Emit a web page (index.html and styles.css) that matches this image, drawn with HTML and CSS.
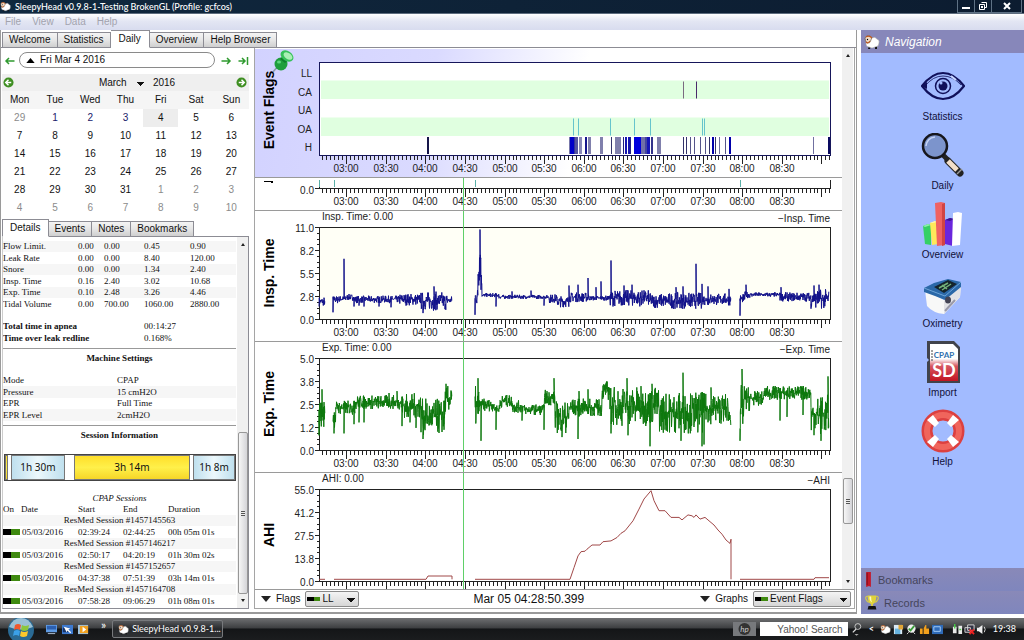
FILE: index.html
```html
<!DOCTYPE html>
<html lang="en">
<head>
  <meta charset="utf-8">
  <title>SleepyHead</title>
  <link rel="stylesheet" href="styles.css">
</head>
<body>
  <svg class="defs" aria-hidden="true">
    <symbol id="sheep" viewBox="0 0 16 16">
      <path d="M5 12l-1 3h2l1-3zM11 12v3h2v-3z" fill="#111"/>
      <path d="M4 6q1-3 4-2q3-2 5 1q3 1 2 4q0 4-4 4q-3 2-6 0q-3 0-3-3q0-3 2-4z" fill="#fff" stroke="#999" stroke-width=".5"/>
      <path d="M1 4q1-3 5-2q3 1 1 4q-1 4-4 3q-2-2-2-5z" fill="#f2dcc8" stroke="#543" stroke-width=".6"/>
      <path d="M2 3q3-2 6 1M2 8q2 2 4-1" fill="none" stroke="#c05a20" stroke-width="1.2"/>
      <circle cx="3.500" cy="5.500" r=".7"/>
    </symbol>
  </svg>

  <header class="titlebar">
    <svg class="logo"><use href="#sheep"/></svg>
    <span class="title">SleepyHead v0.9.8-1-Testing BrokenGL (Profile: gcfcos)</span>
    <div class="winbuttons">
      <button aria-label="Minimize"><svg viewBox="0 0 10 8"><path d="M1 5h8v2H1z" fill="#fff"/></svg></button>
      <button aria-label="Restore"><svg viewBox="0 0 10 8"><path d="M3.500.500h5v5h-1.500M1.500 2.500h5v5h-5z" fill="none" stroke="#fff"/><path d="M3 4h2v2H3z" fill="#fff"/></svg></button>
      <button class="close" aria-label="Close"><svg viewBox="0 0 10 8"><path d="M2 1l6 6M8 1L2 7" stroke="#fff" stroke-width="2"/></svg></button>
    </div>
  </header>

  <nav class="menubar">
    <button>File</button>
    <button>View</button>
    <button>Data</button>
    <button>Help</button>
  </nav>

  <div class="main">
    <div class="workspace">
      <div class="tabs top-tabs">
        <button>Welcome</button>
        <button>Statistics</button>
        <button class="active">Daily</button>
        <button>Overview</button>
        <button>Help Browser</button>
      </div>

      <div class="daily">
        <div class="sidebar">
          <div class="datebar">
            <button class="step" aria-label="Previous day"><svg viewBox="0 0 10 8"><path d="M10 4H2M4.500 1L1.500 4l3 3" fill="none" stroke="#2f9a2f" stroke-width="1.500"/></svg></button>
            <button class="datepill"><svg viewBox="0 0 10 6"><path d="M0 6l5-6 5 6z"/></svg>Fri Mar 4 2016</button>
            <button class="step" aria-label="Next day"><svg viewBox="0 0 10 8"><path d="M0 4h8M5.500 1l3 3-3 3" fill="none" stroke="#2f9a2f" stroke-width="1.500"/></svg></button>
            <button class="step" aria-label="Latest day"><svg viewBox="0 0 10 8"><path d="M0 4h6M3.500 1l3 3-3 3M9 0v8" fill="none" stroke="#2f9a2f" stroke-width="1.500"/></svg></button>
          </div>

          <div class="calendar">
            <div class="cal-head">
              <button aria-label="Previous month"><svg viewBox="0 0 12 12"><circle cx="6" cy="6" r="5.500" fill="#3f8f22"/><path d="M9 6H4M6 3L3 6l3 3" fill="none" stroke="#fff" stroke-width="1.600"/></svg></button>
              <div class="cal-title">
                <select aria-label="Month"><option>March</option></select>
                <span>2016</span>
              </div>
              <button aria-label="Next month"><svg viewBox="0 0 12 12"><circle cx="6" cy="6" r="5.500" fill="#3f8f22"/><path d="M3 6h5M6 3l3 3-3 3" fill="none" stroke="#fff" stroke-width="1.600"/></svg></button>
            </div>
            <table class="days">
              <thead>
                <tr><th>Mon</th><th>Tue</th><th>Wed</th><th>Thu</th><th>Fri</th><th>Sat</th><th>Sun</th></tr>
              </thead>
              <tbody>
                <tr><td class="off">29</td><td class="data">1</td><td class="data">2</td><td class="data">3</td><td class="today">4</td><td>5</td><td>6</td></tr>
                <tr><td>7</td><td>8</td><td>9</td><td>10</td><td>11</td><td>12</td><td>13</td></tr>
                <tr><td>14</td><td>15</td><td>16</td><td>17</td><td>18</td><td>19</td><td>20</td></tr>
                <tr><td>21</td><td>22</td><td>23</td><td>24</td><td>25</td><td>26</td><td>27</td></tr>
                <tr><td>28</td><td>29</td><td>30</td><td>31</td><td class="off">1</td><td class="off">2</td><td class="off">3</td></tr>
                <tr><td class="off">4</td><td class="off">5</td><td class="off">6</td><td class="off">7</td><td class="off">8</td><td class="off">9</td><td class="off">10</td></tr>
              </tbody>
            </table>
          </div>

          <div class="tabs detail-tabs">
            <button class="active">Details</button>
            <button>Events</button>
            <button>Notes</button>
            <button>Bookmarks</button>
          </div>

          <div class="details">
            <div class="report">
              <table class="channels">
                <tr><td>Flow Limit.</td><td>0.00</td><td>0.00</td><td>0.45</td><td>0.90</td></tr>
                <tr><td>Leak Rate</td><td>0.00</td><td>0.00</td><td>8.40</td><td>120.00</td></tr>
                <tr><td>Snore</td><td>0.00</td><td>0.00</td><td>1.34</td><td>2.40</td></tr>
                <tr><td>Insp. Time</td><td>0.16</td><td>2.40</td><td>3.02</td><td>10.68</td></tr>
                <tr><td>Exp. Time</td><td>0.10</td><td>2.48</td><td>3.26</td><td>4.46</td></tr>
                <tr><td>Tidal Volume</td><td>0.00</td><td>700.00</td><td>1060.00</td><td>2880.00</td></tr>
              </table>
              <table class="totals">
                <tr><th>Total time in apnea</th><td>00:14:27</td></tr>
                <tr><th>Time over leak redline</th><td>0.168%</td></tr>
              </table>
              <hr>
              <h3>Machine Settings</h3>
              <table class="settings">
                <tr><td>Mode</td><td>CPAP</td></tr>
                <tr><td>Pressure</td><td>15 cmH2O</td></tr>
                <tr><td>EPR</td><td>Full Time</td></tr>
                <tr><td>EPR Level</td><td>2cmH2O</td></tr>
              </table>
              <hr>
              <h3>Session Information</h3>
              <div class="sessionbar" id="sessionBar"></div>
              <table class="sessions">
                <caption>CPAP Sessions</caption>
                <thead>
                  <tr><th>On</th><th>Date</th><th>Start</th><th>End</th><th>Duration</th></tr>
                </thead>
                <tbody id="sessionRows"></tbody>
              </table>
            </div>
            <div class="scrollbar">
              <i class="up"></i>
              <span class="thumb detail-thumb"></span>
              <i class="down"></i>
            </div>
          </div>
        </div>

        <div class="graphpane">
          <div class="graphview">
            <div class="graphs" id="graphs">
              <div class="graph pinned" data-graph="flags">
                <svg class="pin" viewBox="0 0 21 22">
                  <path d="M0 22l6-7" stroke="#8a9aa8" stroke-width="1.500"/>
                  <ellipse cx="8" cy="14" rx="6.500" ry="6.500" fill="#1f9e3c"/>
                  <path d="M7 9l5-5 5 5-5 4z" fill="#0e7f2c"/>
                  <ellipse cx="14" cy="6" rx="7" ry="5" transform="rotate(35 14 6)" fill="#35c15a"/>
                  <ellipse cx="15" cy="6" rx="5" ry="3" transform="rotate(35 15 6)" fill="#a9efb5"/>
                  <ellipse cx="6" cy="12" rx="2" ry="1.500" fill="#5ed67c"/>
                </svg>
              </div>
              <div class="graph rate" data-graph="rate"></div>
              <div class="graph" data-graph="insp"></div>
              <div class="graph" data-graph="exp"></div>
              <div class="graph" data-graph="ahi"></div>
            </div>
            <div class="scrollbar">
              <i class="up"></i>
              <span class="thumb graph-thumb"></span>
              <i class="down"></i>
            </div>
          </div>
          <div class="graphbar">
            <i class="down big"></i>
            <label for="flagSelect">Flags</label>
            <div class="combo">
              <span class="swatch"></span>
              <select id="flagSelect"><option>LL</option></select>
            </div>
            <span class="stamp">Mar 05 04:28:50.399</span>
            <i class="down big"></i>
            <label for="graphSelect">Graphs</label>
            <div class="combo wide">
              <span class="swatch"></span>
              <select id="graphSelect"><option>Event Flags</option></select>
            </div>
          </div>
        </div>
      </div>
    </div>

    <aside class="navigation">
      <h2><svg class="nav-logo"><use href="#sheep"/></svg>Navigation</h2>
      <div class="nav-items">
        <button>
          <svg viewBox="0 0 44 44">
            <path d="M1 22Q11 9 22 9T43 22Q33 35 22 35T1 22z" fill="none" stroke="#10105a" stroke-width="2.200"/>
            <path d="M4 22Q12 12 22 12T40 21" fill="none" stroke="#10105a" stroke-width=".8"/>
            <path d="M1 22l5-4v7z" fill="#10105a"/>
            <circle cx="22" cy="22" r="7.500" fill="none" stroke="#10105a" stroke-width="1.500"/>
            <circle cx="22" cy="22" r="4.500" fill="#10105a"/>
            <circle cx="20" cy="19" r="1.500" fill="#a2bbff"/>
            <path d="M30 12l5 4" stroke="#c8d6ff" stroke-width="2"/>
          </svg>
          Statistics
        </button>
        <button>
          <svg viewBox="0 0 44 44">
            <path d="M22 22l6 6" stroke="#222" stroke-width="5"/>
            <path d="M27 28l12 12" stroke="#222" stroke-width="7" stroke-linecap="round"/>
            <path d="M27 28l9 9" stroke="#f3dfcb" stroke-width="5"/>
            <circle cx="14" cy="13" r="12" fill="#7c94cc" stroke="#16161c" stroke-width="2.500"/>
            <path d="M5 13q1-8 9-9" fill="none" stroke="#c6d4f4" stroke-width="1.500"/>
            <path d="M36 41l5-5" stroke="#999" stroke-width="1.500"/>
          </svg>
          Daily
        </button>
        <button>
          <svg viewBox="0 0 44 44">
            <path d="M2 24l5-2 3 1v20l-6-1z" fill="#35d065"/><path d="M2 24l5-2 3 1-6 2z" fill="#8cf0a8"/>
            <path d="M9 21l5-2 3 1v22l-6 1z" fill="#ffe95a"/><path d="M9 21l5-2 3 1-6 1z" fill="#fff9b8"/>
            <path d="M24 18l5-2 4 1-1 27-8-2z" fill="#6a25dc"/><path d="M24 18l5-2 4 1-4 2z" fill="#3c1490"/>
            <path d="M14 1l6-1 4 1v42l-8 1z" fill="#ef6262"/><path d="M21 2l3-1v42l-3 1z" fill="#d04444"/>
            <path d="M32 11l5-1 4 1-2 32-8 1z" fill="#fff"/>
          </svg>
          Overview
        </button>
        <button>
          <svg viewBox="0 0 44 44">
            <path d="M4 19l19 10 17-15-1 12-16 17Q12 42 6 35z" fill="#f8f8f8"/>
            <path d="M23 29v14l16-17 1-12z" fill="#e2e2e6"/>
            <path d="M3 17l10-5 14-4 13 3v5L24 29l-10-4-11-4z" fill="#2b68a8"/>
            <path d="M3 17l21 8 16-14" fill="none" stroke="#6da4d8"/>
            <path d="M13 16l14-7 9 4-13 9z" fill="#15242c"/>
            <path d="M18 17l9-5M21 19l9-6M21 14l5 4" stroke="#74b37a" stroke-width="1.500"/>
            <ellipse cx="27" cy="29" rx="3" ry="3.500" fill="#445"/>
            <path d="M24 40l10-11" stroke="#99a" stroke-width="2"/>
          </svg>
          Oximetry
        </button>
        <button>
          <svg viewBox="0 0 44 44">
            <defs><linearGradient id="sd" x2="0" y2="1"><stop offset=".4" stop-color="#fff"/><stop offset=".6" stop-color="#d65560"/><stop offset="1" stop-color="#c21522"/></linearGradient></defs>
            <path d="M6 1h27l6 6v36H6V22l2-2-2-2z" fill="#41434b"/>
            <path d="M9 4h23l5 5v32H9z" fill="url(#sd)"/>
            <path d="M10 11h2M10 14h2M10 17h2M10 20h2" stroke="#444"/>
            <text x="23" y="18" class="sd-cpap">CPAP</text>
            <text x="23" y="37" class="sd-big">SD</text>
          </svg>
          Import
        </button>
        <button>
          <svg viewBox="0 0 44 44">
            <circle cx="22" cy="22" r="16" fill="none" stroke="#dc4040" stroke-width="11"/>
            <circle cx="22" cy="22" r="16" fill="none" stroke="#f0655c" stroke-width="6"/>
            <path d="M6 11l6-5 6 8-4 4zM38 11l-6-5-6 8 4 4zM6 33l6 5 6-8-4-4zM38 33l-6 5-6-8 4-4z" fill="#fff"/>
          </svg>
          Help
        </button>
      </div>
      <button class="nav-bar"><svg class="ribbon" viewBox="0 0 6 18"><path d="M0 1h5v16l-2-1-3 1z" fill="#c4182a"/><path d="M1 2v13" stroke="#7a0c18"/></svg>Bookmarks</button>
      <button class="nav-bar"><svg class="cup" viewBox="0 0 16 18"><path d="M3 2Q0 2 1 5t4 4M13 2q3 0 2 3t-4 4" fill="none" stroke="#d8cc48" stroke-width="1.200"/><path d="M3 1h10q0 8-4 10v2H7v-2Q3 9 3 1z" fill="#e0d33a"/><path d="M5 2h2q0 5 1 7-3-2-3-7z" fill="#fffbc0"/><path d="M4 13h8l1 4H3z" fill="#111"/></svg>Records</button>
    </aside>
  </div>

  <footer class="taskbar">
    <button class="start" aria-label="Start">
      <svg viewBox="0 0 28 22">
        <circle cx="14" cy="12" r="13" fill="#2a6a94"/>
        <path d="M2 9q4-9 12-9t12 9q-12 5-24 0z" fill="#9ac0d4"/>
        <path d="M8 7q3-2 6 0l-1 5q-3-2-6 0z" fill="#f0582c"/>
        <path d="M15 7q3 2 7 0l-1 5q-4 2-7 0z" fill="#8cc63c"/>
        <path d="M7 13q3-2 6 0l-1 5q-3-2-6 0z" fill="#3ba0e8"/>
        <path d="M14 13q3 2 7 0l-1 5q-4 2-7 0z" fill="#fbc82c"/>
      </svg>
    </button>
    <div class="quick">
      <svg viewBox="0 0 12 12"><path d="M0 1h12v8H0z" fill="#5f9be4"/><path d="M1 2h10v4H1z" fill="#2b5fb0"/><path d="M2 10h8v1H2z" fill="#b8c8dc"/></svg>
      <svg viewBox="0 0 12 12"><path d="M0 1h12v10H0z" fill="#3d7ad0"/><path d="M1 4h6v5H1z" fill="#16346c"/><path d="M2 3l7 2-2 1 3 3-1 1-3-3-1 2z" fill="#fff"/></svg>
      <svg viewBox="0 0 12 12"><path d="M0 1h11v10H0z" fill="#9ac2e4"/><path d="M2 2h9v8H2z" fill="#f0a020"/><path d="M5 3l4 3-4 3z" fill="#fff"/></svg>
    </div>
    <span class="more">»</span>
    <button class="task"><svg><use href="#sheep"/></svg>SleepyHead v0.9.8-1...</button>
    <span class="hp"><svg viewBox="0 0 22 14"><circle cx="11" cy="7" r="6" fill="#333"/><text x="11" y="10">hp</text></svg></span>
    <input class="search" type="text" placeholder="Yahoo! Search" aria-label="Yahoo! Search">
    <svg class="glass" viewBox="0 0 12 16"><circle cx="7" cy="5" r="3.500" fill="none" stroke="#ddd"/><path d="M5 8l-4 4" stroke="#ddd" stroke-width="1.500"/><path d="M3 14h5l-2.500 2z" fill="#aaa"/></svg>
    <span class="chevron">&lt;</span>
    <div class="tray">
      <svg><use href="#sheep"/></svg>
      <svg viewBox="0 0 12 12"><path d="M1 1h9v10H1z" fill="#dbe9f4"/><path d="M2 5h6v6H2z" fill="#67b3e0"/><path d="M6 1h5v5H6z" fill="#e0a638"/></svg>
      <svg viewBox="0 0 12 12"><circle cx="6" cy="5" r="4.500" fill="#eee"/><path d="M3 5l2 2 4-5" fill="none" stroke="#3a9c3a" stroke-width="2"/><path d="M3 9l-2 2M8 9l2 2" stroke="#ddd"/></svg>
      <svg viewBox="0 0 12 12"><path d="M1 5h3v6H1zM5 5l2-4h1v4h3v6H5z" fill="#f2a01c"/></svg>
      <svg viewBox="0 0 12 12"><path d="M0 1h12v10H0z" fill="#2f6bb8"/><path d="M2 3h7v5H2z" fill="none" stroke="#a8d0f8"/></svg>
    </div>
    <div class="tray">
      <svg viewBox="0 0 12 12"><path d="M1 3h4v7H1zM7 2h4v9H7z" fill="#e8e8e8"/><path d="M3 0v5M8 6h2" stroke="#4c4" stroke-width="1.500"/></svg>
      <svg viewBox="0 0 12 12"><path d="M1 4h6v5H1zM4 1h7v6H4z" fill="#334" stroke="#ddd"/><path d="M6 6l5 5M11 6l-5 5" stroke="#e22" stroke-width="2"/></svg>
      <svg viewBox="0 0 12 12"><path d="M1 4h2l4-3v10L3 8H1z" fill="#eee"/><path d="M9 3q2 3 0 6" fill="none" stroke="#ddd"/></svg>
    </div>
    <span class="clock">19:38</span>
  </footer>

  <script src="script.js"></script>
</body>
</html>
```

FILE: styles.css
```css
body {
  margin: 0;
  height: 100vh;
  display: flex;
  flex-direction: column;
  overflow: hidden;
  background: #fff;
  color: #111;
  font-family: "Liberation Sans", Arial, sans-serif;
  font-size: 10px;
  line-height: 12px;
}

button, select, input {
  font: inherit;
  color: inherit;
  margin: 0;
  padding: 0;
  border: 0;
  background: none;
}

select {
  appearance: none;
}

.defs {
  position: absolute;
  width: 0;
  height: 0;
}

i.up, i.down {
  width: 0;
  height: 0;
  border: 2px solid transparent;
}

i.up {
  border-top: 0;
  border-bottom: 3px solid #222;
}

i.down {
  border-bottom: 0;
  border-top: 3px solid #222;
}

i.big {
  border-width: 6px 5px 0;
}

/* window title */
.titlebar {
  display: flex;
  align-items: center;
  height: 13px;
  flex: none;
  background: linear-gradient(90deg, #10283e, #0c1c30);
  border-bottom: 1px solid #5d6c7e;
  color: #fff;
  font-family: Lato, sans-serif;
  font-size: 9px;
  font-weight: 500;
}

.logo {
  width: 11px;
  height: 11px;
  margin-right: 4px;
}

.title {
  flex: 1;
}

.winbuttons {
  display: flex;
  height: 13px;
  margin-right: 2px;
}

.winbuttons button {
  width: 18px;
  border: 1px solid #5f7285;
  border-top: 0;
  margin-left: -1px;
  line-height: 0;
}

.winbuttons .close {
  width: 31px;
}

.winbuttons svg {
  width: 10px;
  height: 8px;
}

.menubar {
  display: flex;
  gap: 11px;
  height: 16px;
  flex: none;
  padding-left: 5px;
  background: linear-gradient(#fff, #e3e6f3 45%, #d8dcef);
  color: #a2a3ae;
}

.main {
  flex: 1;
  display: flex;
  gap: 4px;
  min-height: 0;
  margin-bottom: 4px;
}

.workspace {
  flex: 1;
  display: flex;
  flex-direction: column;
  min-width: 0;
  border: 1px solid #9a9a9a;
  border-width: 0 1px 2px;
}

/* tabs */
.tabs {
  display: flex;
  align-items: flex-end;
  flex: none;
  position: relative;
  z-index: 1;
}

.tabs button {
  height: 16px;
  padding: 0 6px;
  border: 1px solid #8c8c94;
  border-left-width: 0;
  background: linear-gradient(#f4f4f4, #e6e6e6 50%, #cfcfcf);
}

.tabs button:first-child {
  border-left-width: 1px;
}

.tabs .active {
  height: 18px;
  padding: 0 8px;
  background: #fff;
  border-bottom-color: #fff;
}

.top-tabs {
  height: 18px;
  padding-left: 1px;
}

.daily {
  flex: 1;
  display: grid;
  grid-template-columns: 248px 1fr;
  gap: 5px;
  min-height: 0;
  margin-top: -1px;
  border-top: 1px solid #8c8c94;
}

.sidebar {
  display: flex;
  flex-direction: column;
  min-height: 0;
  padding: 0 0 3px 1px;
}

.datebar {
  display: flex;
  align-items: center;
  gap: 6px;
  height: 26px;
  padding: 0 0 0 2px;
}

.step {
  width: 11px;
  line-height: 0;
}

.step svg {
  width: 11px;
  height: 8px;
}

.datepill {
  flex: 1;
  height: 16px;
  display: flex;
  align-items: center;
  gap: 5px;
  padding-left: 6px;
  margin: -2px 0 0 -2px;
  border: 1px solid #8a8a8a;
  border-radius: 8px;
}

.datepill svg {
  width: 9px;
  height: 5px;
}

/* calendar */
.cal-head {
  display: flex;
  justify-content: space-between;
  align-items: center;
  height: 17px;
  padding: 0 2px 0 1px;
  background: #efefef;
}

.cal-head button {
  line-height: 0;
}

.cal-head svg {
  width: 11px;
  height: 11px;
}

.cal-title {
  display: flex;
  gap: 6px;
  padding-left: 24px;
}

.cal-title select {
  width: 48px;
  background: linear-gradient(45deg, transparent 50%, #111 50%) no-repeat 38px 5px / 4px 4px,
    linear-gradient(-45deg, transparent 50%, #111 50%) no-repeat 42px 5px / 4px 4px;
}

.days {
  width: 100%;
  table-layout: fixed;
  border-collapse: collapse;
  text-align: center;
}

.days th {
  height: 18px;
  padding: 0;
  background: #f5f5f5;
  font-weight: normal;
}

.days td {
  height: 18px;
  padding: 0;
}

.days .off {
  color: #8b8b8b;
}

.days .data {
  color: #20206a;
}

.days .today {
  background: #ededed;
}

.detail-tabs {
  margin-top: 2px;
}

.detail-tabs .active {
  padding: 0 7px;
}

/* details report */
.details {
  flex: 1;
  display: flex;
  min-height: 0;
  margin-top: -1px;
  border: 1px solid #8c8c94;
  border-left-color: #ccc;
}

.report {
  flex: 1;
  min-width: 0;
  overflow: hidden;
  padding: 4px 1px 0 0;
  font-family: "Liberation Serif", "Times New Roman", serif;
  font-size: 9px;
  line-height: 11px;
}

.report table {
  width: 100%;
  table-layout: fixed;
  border-collapse: collapse;
}

.report td, .report th {
  height: 11px;
  padding: 0;
  text-align: left;
  white-space: nowrap;
}

.report tr:nth-child(even) td {
  height: 12px;
}

.channels tr:nth-child(odd), .settings tr:nth-child(even), .sessions .name {
  background: #f6f6f6;
}

.channels td:nth-child(1) {
  width: 75px;
}

.channels td:nth-child(2) {
  width: 26px;
}

.channels td:nth-child(3) {
  width: 40px;
}

.channels td:nth-child(4) {
  width: 46px;
}

.totals {
  margin-top: 11px;
}

.totals th {
  width: 141px;
}

.report hr {
  height: 1px;
  margin: 4px 0;
  border: 0;
  background: #999;
}

.report h3 {
  margin: 0;
  font-size: 9px;
  text-align: center;
}

.settings {
  margin-top: 11px;
}

.settings td:first-child {
  width: 114px;
}

.sessionbar {
  display: flex;
  box-sizing: border-box;
  height: 27px;
  margin: 13px 0 12px 1px;
  border: 1px solid #444;
  font-family: "Noto Sans", sans-serif;
  font-size: 10px;
  line-height: 25px;
  text-align: center;
}

.sessionbar span {
  box-sizing: border-box;
  flex: none;
  overflow: hidden;
  white-space: nowrap;
}

.sessionbar .cool {
  border: 1px solid #777;
  background: linear-gradient(90deg, #bfe0ee, #ecf8fc 50%, #bfe0ee);
  line-height: 23px;
}

.sessionbar .warm {
  border: 1px solid #777;
  background: linear-gradient(#ffdf2a, #fff04a 50%, #f6d628);
  line-height: 23px;
}

.sessions caption {
  font-style: italic;
}

.sessions th {
  font-weight: normal;
}

.sessions th:nth-child(1) {
  width: 18px;
}

.sessions th:nth-child(2) {
  width: 57px;
}

.sessions th:nth-child(3), .sessions th:nth-child(4) {
  width: 45px;
}

.report .name {
  text-align: center;
}

.report .date {
  padding-left: 1px;
}

.swatch {
  display: inline-block;
  width: 17px;
  height: 6px;
  background: linear-gradient(90deg, #000 50%, #3f8a10 50%);
}

.scrollbar {
  display: flex;
  flex-direction: column;
  align-items: center;
  justify-content: space-between;
  width: 11px;
  flex: none;
  padding: 6px 0;
  background: #f0f0f0;
}

.thumb {
  box-sizing: border-box;
  width: 10px;
  border: 1px solid #979797;
  border-radius: 2px;
  background: repeating-linear-gradient(#555 0 1px, #eee 1px 2px) no-repeat center / 4px 5px,
    linear-gradient(90deg, #f6f6f6, #d4d4d8);
}

.detail-thumb {
  height: 162px;
  margin: auto 0 5px;
}

.graph-thumb {
  height: 46px;
  margin: auto 0 56px;
}

/* graphs */
.graphpane {
  display: flex;
  flex-direction: column;
  min-width: 0;
  min-height: 0;
  margin: 0 1px 3px 0;
  border: 1px solid #a5a5a5;
  border-top: 0;
}

.graphview {
  flex: 1;
  display: flex;
  min-height: 0;
  overflow: hidden;
  padding-right: 1px;
}

.graphs {
  flex: 1;
  min-width: 0;
  padding-top: 1px;
}

.graph {
  height: 131px;
  position: relative;
  overflow: hidden;
}

.graph.pinned {
  height: 129px;
  background: linear-gradient(100deg, #d2d2ff, #dadaff 30%, #fff 55%);
}

.graph.rate {
  height: 33px;
}

.plot {
  display: block;
  width: 100%;
  height: 100%;
}

.pin {
  position: absolute;
  left: 18px;
  top: 1px;
  width: 21px;
  height: 22px;
}

.plot .axis {
  stroke: #222;
  fill: none;
  shape-rendering: crispEdges;
}

.plot .flagframe {
  stroke: #16165a;
  fill: none;
  shape-rendering: crispEdges;
}

.plot .sep {
  stroke: #9a9a9a;
  shape-rendering: crispEdges;
}

.plot .cursor {
  stroke: #5fd068;
  shape-rendering: crispEdges;
}

.plot text {
  fill: #222;
}

.plot .mid {
  text-anchor: middle;
}

.plot .end {
  text-anchor: end;
}

.plot .name {
  font-size: 14px;
  font-weight: bold;
  fill: #000;
  text-anchor: middle;
}

.plot .trace {
  fill: none;
  stroke-width: 1;
}

.graphbar {
  display: flex;
  align-items: center;
  gap: 5px;
  height: 18px;
  flex: none;
  padding: 0 3px 0 6px;
  border-top: 1px solid #999;
}

.combo {
  position: relative;
  width: 54px;
}

.combo.wide {
  width: 98px;
}

.combo select {
  width: 100%;
  height: 16px;
  display: block;
  padding-left: 16px;
  border: 1px solid #8a8a8a;
  border-radius: 2px;
  background: linear-gradient(45deg, transparent 50%, #111 50%) no-repeat right 7px top 6px / 4px 4px,
    linear-gradient(-45deg, transparent 50%, #111 50%) no-repeat right 3px top 6px / 4px 4px,
    linear-gradient(#f4f4f4, #d6d6d6);
}

.combo .swatch {
  position: absolute;
  left: 2px;
  top: 6px;
  width: 13px;
  height: 4px;
}

.stamp {
  flex: 1;
  font-size: 12px;
  padding-left: 109px;
}

/* navigation */
.navigation {
  display: flex;
  flex-direction: column;
  width: 163px;
  flex: none;
  background: #a2bbff;
}

.navigation h2 {
  display: flex;
  align-items: center;
  gap: 5px;
  height: 23px;
  margin: 0;
  padding-left: 3px;
  background: #8787ba;
  color: #fff;
  font-size: 12px;
  font-weight: normal;
  font-style: italic;
}

.nav-logo {
  width: 16px;
  height: 16px;
}

.nav-items {
  flex: 1;
  display: flex;
  flex-direction: column;
  align-items: center;
  gap: 9px;
  padding-top: 11px;
}

.nav-items button {
  display: flex;
  flex-direction: column;
  align-items: center;
  gap: 2px;
  line-height: 14px;
  color: #10103a;
}

.nav-items svg {
  width: 44px;
  height: 44px;
}

.sd-cpap {
  font-family: Lato, sans-serif;
  font-size: 8px;
  font-weight: bold;
  fill: #2f6fae;
  text-anchor: middle;
}

.sd-big {
  font-family: Lato, sans-serif;
  font-size: 18px;
  font-weight: bold;
  fill: #fff;
  text-anchor: middle;
}

.nav-bar {
  display: flex;
  align-items: center;
  gap: 5px;
  height: 23px;
  padding-left: 4px;
  background: linear-gradient(#8989b8, #7f86bd);
  color: #45455c;
  font-size: 11px;
}

.ribbon {
  width: 8px;
  height: 17px;
}

.cup {
  width: 14px;
  height: 17px;
}

/* taskbar */
.taskbar {
  display: flex;
  align-items: center;
  height: 22px;
  flex: none;
  background: linear-gradient(#6e6f71, #3d3f41 45%, #141618 50%, #1b1c1e);
  color: #fff;
  font-family: Lato, sans-serif;
  font-size: 9px;
}

.start {
  width: 28px;
  height: 22px;
  margin-left: 7px;
}

.start svg {
  width: 28px;
  height: 22px;
}

.quick {
  display: flex;
  gap: 5px;
  margin-left: 11px;
}

.quick svg, .tray svg {
  width: 11px;
  height: 11px;
}

.more {
  margin: -8px 6px 0 12px;
  font-size: 12px;
}

.task {
  display: flex;
  align-items: center;
  gap: 3px;
  height: 18px;
  width: 111px;
  padding-left: 5px;
  border: 1px solid #77797c;
  border-radius: 2px;
  background: linear-gradient(#55575a, #26282b 50%, #303235);
  white-space: nowrap;
}

.task svg {
  width: 11px;
  height: 11px;
  flex: none;
}

.hp {
  margin-left: auto;
  width: 23px;
  height: 14px;
  background: #77797c;
}

.hp svg {
  width: 23px;
  height: 14px;
}

.hp text {
  fill: #ccc;
  font-size: 8px;
  font-style: italic;
  text-anchor: middle;
}

.search {
  width: 88px;
  height: 14px;
  box-sizing: border-box;
  margin: 0 4px;
  padding-right: 5px;
  background: #fff;
  font-family: "Liberation Sans", Arial, sans-serif;
  font-size: 10px;
  text-align: right;
}

.search::placeholder {
  color: #555;
  opacity: 1;
}

.glass {
  width: 10px;
  height: 14px;
}

.chevron {
  margin: 0 6px 0 7px;
  font-weight: bold;
}

.tray {
  display: flex;
  gap: 2px;
  margin-right: 9px;
}

.tray + .tray {
  gap: 1px;
  margin-right: 6px;
}

.clock {
  margin-right: 8px;
}
```

FILE: script.js
```js
// Night runs 02:39:24 - 09:06:29
const T_START = 2.657;
const T_END = 9.108;
const CURSOR = 4.481;
const SAMPLES = 511;
const LEFT = 64;
const RIGHT = 12;

const sessions = [
  { id: "1457145563", start: "02:39:24", end: "02:44:25", length: "00h 05m 01s" },
  { id: "1457146217", start: "02:50:17", end: "04:20:19", length: "01h 30m 02s" },
  { id: "1457152657", start: "04:37:38", end: "07:51:39", length: "03h 14m 01s" },
  { id: "1457164708", start: "07:58:28", end: "09:06:29", length: "01h 08m 01s" }
];

// [width, class, label]
const sessionBar = [
  [3, "warm", ""], [3, "", ""],
  [54, "cool", "1h 30m"], [9, "", ""],
  [116, "warm", "3h 14m"], [3, "", ""],
  [42, "cool", "1h 8m"]
];

// [sample from, sample to, low, high]; spikes are [sample, value]
const insp = {
  title: "Insp. Time", color: "#12128a", max: 11, fill: "#fffff6",
  ticks: ["11.0", "8.2", "5.5", "2.8", "0.0"],
  runs: [
    [[0, 6, 1.5, 2.7]],
    [[14, 19, 1.8, 2.8], [19, 27, 2.0, 2.8], [27, 35, 2.2, 3.0], [35, 80, 1.9, 2.8], [80, 102, 1.6, 3.1], [102, 128, 1.0, 3.3], [128, 133, 1.6, 2.8]],
    [[156, 159, 1.4, 4.0], [159, 160, 3, 8], [160, 162, 4, 10.7], [162, 163, 3, 6], [163, 180, 2.6, 3.1], [180, 230, 2.4, 2.9], [230, 238, 1.9, 3.0], [238, 250, 1.4, 2.8],
     [250, 270, 2.0, 3.2], [270, 291, 2.2, 2.8], [291, 330, 1.5, 3.5], [330, 350, 1.3, 3.1], [350, 384, 1.2, 3.2], [384, 412, 1.6, 3.1]],
    [[421, 426, 1.9, 3.0], [426, 431, 2.5, 3.3], [431, 461, 2.6, 3.2], [461, 491, 2.1, 3.2], [491, 510, 1.2, 3.6]]
  ],
  spikes: [[14, 0.8], [25, 7.2], [35, 1.5], [40, 1.6], [45, 1.5], [60, 1.5], [72, 1.4], [104, 0.7], [115, 3.9], [156, 0.5], [161, 10.7], [177, 1.5], [193, 3.3], [212, 3.4], [225, 1.6],
    [250, 4.0], [259, 4.1], [269, 4.9], [277, 3.8], [282, 4.5], [292, 7.0], [305, 4.0], [313, 4.1], [357, 3.8], [364, 3.9], [377, 6.6], [383, 4.2], [389, 3.9], [410, 3.6],
    [421, 0.4], [427, 4.1], [462, 3.8], [495, 4.0], [500, 4.1]]
};

const exp = {
  title: "Exp. Time", color: "#0d780d", max: 5, fill: "#fff",
  ticks: ["5.0", "3.8", "2.5", "1.2", "0.0"],
  runs: [
    [[0, 6, 1.2, 2.8]],
    [[14, 17, 1.2, 2.6], [17, 36, 1.9, 2.7], [36, 60, 2.2, 3.0], [60, 82, 2.2, 3.0], [82, 102, 1.7, 3.1], [102, 126, 0.8, 2.8], [126, 133, 2.0, 3.5]],
    [[156, 160, 1.0, 3.5], [160, 175, 2.1, 2.8], [175, 181, 2.0, 2.5], [181, 193, 2.3, 3.0], [193, 205, 2.0, 2.7], [205, 225, 1.9, 2.5], [225, 236, 2.4, 3.3],
     [236, 250, 0.9, 2.7], [250, 283, 1.8, 2.8], [283, 291, 2.7, 3.8], [291, 340, 1.3, 3.5], [340, 384, 0.9, 3.2], [384, 410, 1.4, 3.1], [410, 412, 1.0, 2.6]],
    [[421, 425, 1.0, 3.6], [425, 431, 2.1, 3.5], [431, 445, 2.4, 3.2], [445, 492, 2.7, 3.5], [492, 510, 0.8, 3.0]]
  ],
  spikes: [[0, 0.8], [3, 3.3], [15, 0.9], [25, 0.9], [35, 1.4], [40, 1.5], [45, 1.5], [70, 3.1], [78, 3.2], [83, 1.3], [88, 1.8], [91, 1.5], [97, 1.2], [104, 0.6], [125, 1.1], [127, 3.6],
    [159, 3.9], [162, 0.5], [177, 1.1], [203, 1.6], [225, 1.1], [235, 3.9], [243, 0.7], [259, 0.6], [260, 3.2], [269, 3.3], [292, 0.9], [308, 3.9], [309, 0.8], [331, 0.2], [333, 3.6],
    [362, 0.5], [364, 4.2], [383, 0.2], [385, 0.3], [392, 3.4], [412, 0.9], [421, 0.5], [423, 4.4], [461, 1.6], [468, 1.8], [484, 1.9], [502, 0.5], [509, 4.0]]
};

const ahi = {
  title: "AHI", color: "#a04848", max: 55, fill: "#fff", last: true,
  ticks: ["55.0", "41.2", "27.5", "13.8", "0.0"],
  lines: [
    [[0, 1], [6, 1]],
    [[15, 1], [107, 1], [109, 3], [133, 3], [133, 1]],
    [[156, 1], [251, 1], [255, 8], [259, 15], [262, 17.5], [266, 17.8], [268, 19], [270, 20], [273, 21.5], [281, 21.5], [284, 23.5], [292, 24], [298, 26], [302, 28.5], [306, 30],
     [314, 36], [320, 43], [325, 49], [332, 54], [335, 48], [340, 42], [346, 42], [352, 38], [360, 38], [363, 36.5], [369, 39.5], [373, 39], [375, 38], [377, 39.5], [381, 37],
     [386, 38], [392, 35], [395, 33.5], [399, 30.5], [403, 28], [407, 24.5], [411, 22.5], [412, 25], [412, 1]],
    [[421, 1], [495, 1], [496, 2], [510, 2]]
  ]
};

// [sample, width, colour]
const flags = {
  CA: [[364, 1, "#7a6a80"], [377, 1, "#4a2a6a"]],
  OA: [254, 259, 291, 315, 331, 383, 385].map(s => [s, 1, "#66c4cc"]),
  H: [[108, 2, "#16164a"], [250, 1, "#7777aa"], [251, 4, "#0000c8"], [255, 1, "#33339a"], [256, 3, "#5555a0"], [260, 3, "#8a8ab8"],
    [266, 2, "#16168a"], [269, 3, "#8080ac"], [281, 3, "#8080ac"], [292, 1, "#33336a"], [296, 6, "#8080ac"], [304, 1, "#222280"], [306, 2, "#1616b0"],
    [309, 2, "#1616b0"], [311, 1, "#222280"], [315, 7, "#0000dd"], [322, 4, "#7070a8"], [326, 2, "#4444a0"], [328, 3, "#1616b8"], [332, 2, "#33338a"], [338, 4, "#8080ac"],
    [364, 1, "#33336a"], [367, 1, "#33336a"], [371, 1, "#55558a"], [375, 1, "#55558a"], [381, 1, "#55558a"], [386, 1, "#55558a"], [390, 1, "#33336a"], [393, 2, "#0000aa"],
    [396, 1, "#33336a"], [400, 1, "#7070a0"], [406, 1, "#55558a"], [410, 2, "#0000aa"], [494, 1, "#7070a0"], [509, 2, "#0a0a60"]]
};

let seed = 7;
function random() {
  seed = (seed * 16807) % 2147483647;
  return seed / 2147483647;
}

function timeAxis(w, y, withLabels = true) {
  let d = "";
  let labels = "";
  // one tick every three minutes, a long one each half hour
  for (let m = 162; m <= 546; m += 3) {
    const x = Math.round(LEFT + (m / 60 - T_START) / (T_END - T_START) * w);
    const major = m % 30 === 0;
    d += `M${x}.5 ${y}v${major ? 8 : 4}`;
    if (withLabels && major && m < 540) {
      const hh = String(Math.floor(m / 60)).padStart(2, "0");
      const mm = String(m % 60).padStart(2, "0");
      labels += `<text class="mid" x="${x}" y="${y + 16}">${hh}:${mm}</text>`;
    }
  }
  return `<path class="axis" d="${d}"/>${labels}`;
}

function cursorLine(w, h) {
  const x = Math.round(LEFT + (CURSOR - T_START) / (T_END - T_START) * w);
  return `<path class="cursor" d="M${x}.5 0V${h}"/>`;
}

function title(text, y) {
  return `<text class="name" transform="translate(19 ${y}) rotate(-90)">${text}</text>`;
}

function drawFlags(w, h) {
  const names = ["LL", "CA", "UA", "OA", "H"];
  const top = 13;
  const step = 18.5;
  let out = `<rect x="${LEFT}" y="${top}" width="${w}" height="93" fill="#fff"/>`;
  names.forEach((name, i) => {
    const y = top + i * step;
    if (i % 2) out += `<rect x="${LEFT + 2}" y="${y}" width="${w - 3}" height="${step}" fill="#e0ffe0"/>`;
    out += `<text class="end" x="${LEFT - 7}" y="${y + 15}">${name}</text>`;
    (flags[name] || []).forEach(([s, width, color]) => {
      out += `<rect x="${Math.round(LEFT + s / SAMPLES * w)}" y="${y + 1}" width="${width}" height="17" fill="${color}"/>`;
    });
  });
  out += `<path class="flagframe" d="M${LEFT}.5 ${top}.5h${w}v93h-${w}z"/>`;
  return out + timeAxis(w, top + 94) + title("Event Flags", 61) + `<path class="sep" d="M0 ${h - 0.5}h${LEFT + w + RIGHT}"/>`;
}

function drawRate(w, h) {
  let out = `<path class="axis" d="M${LEFT}.5 2v8.500h${w}V2M${LEFT - 4} 10.500h4"/>`;
  [0, 15, 156, 421].forEach(s => {
    out += `<rect x="${Math.round(LEFT + s / SAMPLES * w)}" y="2" width="1" height="7" fill="#5ab0a8"/>`;
  });
  return out + timeAxis(w, 11) + `<text class="end" x="${LEFT - 5}" y="16">0.0</text><path d="M9 3h9v2h-2v-1h-7z"/>`
    + cursorLine(w, h) + `<path class="sep" d="M0 ${h - 0.5}h${LEFT + w + RIGHT}"/>`;
}

function drawTrace(g, w, top, ph) {
  const px = s => (LEFT + s / SAMPLES * w).toFixed(1);
  const py = v => (top + ph - v / g.max * ph).toFixed(1);
  let d = "";
  if (g.lines) {
    g.lines.forEach(line => {
      d += "M" + line.map(([s, v]) => `${px(s)} ${py(v)}`).join("L");
    });
    return d;
  }
  const spikes = new Map(g.spikes);
  g.runs.forEach(run => {
    let cmd = "M";
    run.forEach(([from, to, low, high]) => {
      for (let s = from; s < to; s += 0.25) {
        const u = random() * 2 - 1;
        const v = (low + high) / 2 + Math.sign(u) * Math.pow(Math.abs(u), 1.8) * (high - low) / 2;
        d += `${cmd}${px(s)} ${py(v)}`;
        cmd = "L";
        if (spikes.has(s)) d += `L${px(s)} ${py(spikes.get(s))}L${px(s + 0.3)} ${py(v)}`;
      }
    });
  });
  return d;
}

function drawGraph(g, w, h) {
  const top = 16;
  const ph = 92;
  let out = `<rect x="${LEFT}" y="${top}" width="${w}" height="${ph}" fill="${g.fill}"/>`;
  let ticks = "";
  g.ticks.forEach((t, i) => {
    out += `<text class="end" x="${LEFT - 5}" y="${top + i * 23 + 5}">${t}</text>`;
  });
  for (let i = 0; i <= 16; i++) {
    const len = i % 4 ? 2 : 4;
    ticks += `M${LEFT - len} ${Math.round(top + i * ph / 16)}.5h${len}`;
  }
  out += `<path class="axis" d="M${LEFT}.5 ${top}.5h${w}v${ph}h-${w}z${ticks}"/>`;
  out += `<path class="trace" stroke="${g.color}" d="${drawTrace(g, w, top, ph)}"/>`;
  out += `<text x="${LEFT + 3}" y="9">${g.title}: 0.00</text>`;
  out += `<text class="end" x="${LEFT + w}" y="11">−${g.title}</text>`;
  out += timeAxis(w, top + ph + 1, !g.last) + title(g.title, top + ph / 2) + cursorLine(w, h);
  return out + `<path class="sep" d="M0 ${h - 0.5}h${LEFT + w + RIGHT}"/>`;
}

function render() {
  seed = 7;
  document.querySelectorAll(".graph").forEach(el => {
    const w = el.clientWidth - LEFT - RIGHT;
    const h = el.clientHeight;
    const kind = el.dataset.graph;
    let svg = el.querySelector(".plot");
    if (!svg) {
      svg = document.createElementNS("http://www.w3.org/2000/svg", "svg");
      svg.setAttribute("class", "plot");
      el.prepend(svg);
    }
    if (kind === "flags") svg.innerHTML = drawFlags(w, h);
    else if (kind === "rate") svg.innerHTML = drawRate(w, h);
    else svg.innerHTML = drawGraph({ insp, exp, ahi }[kind], w, h);
  });
}

const barTotal = sessionBar.reduce((sum, part) => sum + part[0], 0);
document.getElementById("sessionBar").innerHTML = sessionBar
  .map(([size, cls, label]) => `<span class="${cls}" style="width:${size / barTotal * 100}%">${label}</span>`)
  .join("");

document.getElementById("sessionRows").innerHTML = sessions.map(s => `
  <tr><td class="name" colspan="5">ResMed Session #${s.id}</td></tr>
  <tr><td><span class="swatch"></span></td><td class="date">05/03/2016</td><td>${s.start}</td><td>${s.end}</td><td>${s.length}</td></tr>
`).join("");

render();
window.addEventListener("resize", render);
```
